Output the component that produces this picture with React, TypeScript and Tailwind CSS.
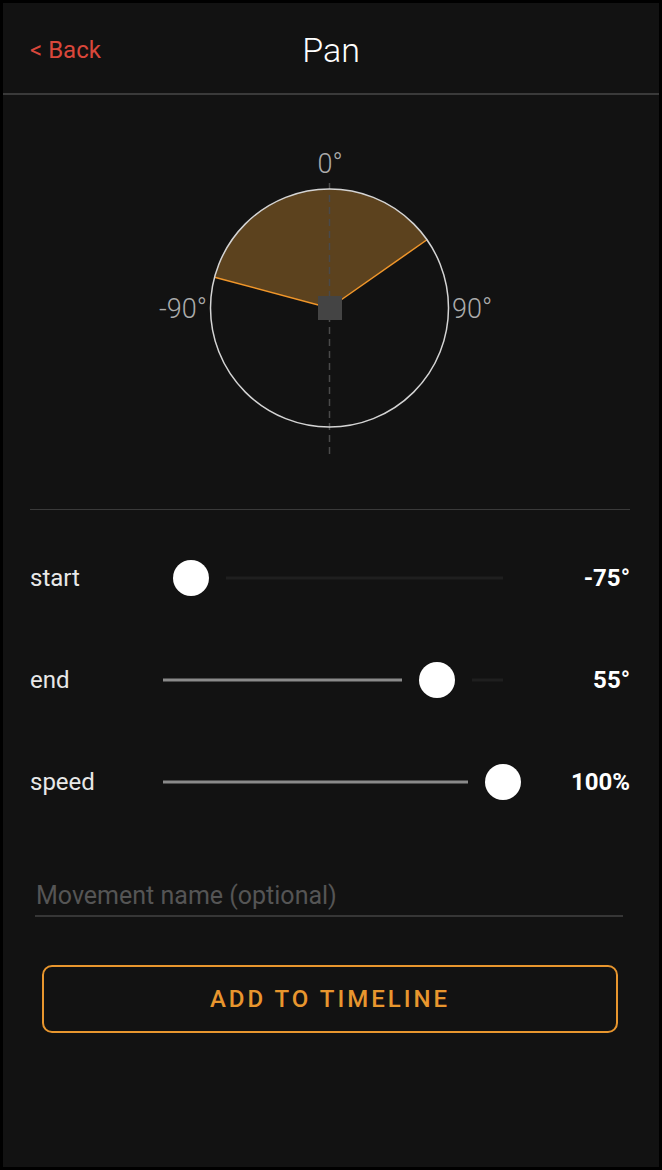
import React from "react";

function Slider({ f }: { f: number }) {
  const W = 340;
  const c = f * W;
  const activeEnd = c - 35;
  const inactiveStart = c + 35;
  return (
    <div className="relative w-[340px] h-9">
      {activeEnd > 0 && (
        <div
          className="absolute top-1/2 -translate-y-1/2 left-0 h-[3px] bg-[#8a8a8a]"
          style={{ width: activeEnd }}
        />
      )}
      {inactiveStart < W && (
        <div
          className="absolute top-1/2 -translate-y-1/2 h-[3px] bg-[#1f1f1f]"
          style={{ left: inactiveStart, width: W - inactiveStart }}
        />
      )}
      <div
        className="absolute top-0 w-9 h-9 rounded-full bg-white"
        style={{ left: c - 18 }}
      />
    </div>
  );
}

function Row({ label, f, value }: { label: string; f: number; value: string }) {
  return (
    <div className="h-[102px] flex items-center pl-[27px] pr-[29px]">
      <div className="w-[133px] text-[24px] text-[#e8e8e8] font-normal">{label}</div>
      <Slider f={f} />
      <div className="flex-1 text-right text-[24px] font-bold text-white">{value}</div>
    </div>
  );
}

export default function App() {
  const cx = 326.5;
  const cy = 213;
  const r = 119;
  const p1x = cx - r * Math.sin((75 * Math.PI) / 180);
  const p1y = cy - r * Math.cos((75 * Math.PI) / 180);
  const p2x = cx + r * Math.sin((55 * Math.PI) / 180);
  const p2y = cy - r * Math.cos((55 * Math.PI) / 180);
  return (
    <div
      className="w-[662px] h-[1170px] bg-[#121212] border-[3px] border-black flex flex-col"
      style={{ fontFamily: "Roboto, 'Liberation Sans', sans-serif" }}
    >
      <div className="h-[92px] shrink-0 grid grid-cols-[1fr_auto_1fr] items-center border-b-2 border-[#3a3a3a] pt-1">
        <div className="pl-[27px] text-[24px] text-[#d9473b]">&lt; Back</div>
        <div className="text-[34px] font-light text-white">Pan</div>
        <div />
      </div>

      <svg width="656" height="414" className="block shrink-0">
        <path
          d={`M ${cx} ${cy} L ${p1x} ${p1y} A ${r} ${r} 0 0 1 ${p2x} ${p2y} Z`}
          fill="#5c421e"
        />
        <line x1={cx} y1={88} x2={cx} y2={362} stroke="#4a4a4a" strokeWidth="1.5" strokeDasharray="7 5" />
        <line x1={cx} y1={cy} x2={p1x} y2={p1y} stroke="#f0962a" strokeWidth="1.5" />
        <line x1={cx} y1={cy} x2={p2x} y2={p2y} stroke="#f0962a" strokeWidth="1.5" />
        <circle cx={cx} cy={cy} r={r} fill="none" stroke="#d4d4d4" strokeWidth="1.5" />
        <rect x={315} y={201} width={24} height={24} fill="#444444" />
        <text x={327} y={78} textAnchor="middle" fontSize="27" fontWeight="300" fill="#ababab" fontFamily="Roboto, sans-serif">0°</text>
        <text x={204} y={223} textAnchor="end" fontSize="27" fontWeight="300" fill="#ababab" fontFamily="Roboto, sans-serif">-90°</text>
        <text x={449} y={223} textAnchor="start" fontSize="27" fontWeight="300" fill="#ababab" fontFamily="Roboto, sans-serif">90°</text>
      </svg>

      <div className="ml-[27px] mr-[29px] h-px bg-[#3a3a3a] shrink-0" />

      <div className="pt-[17px]">
        <Row label="start" f={15 / 180} value="-75°" />
        <Row label="end" f={145 / 180} value="55°" />
        <Row label="speed" f={1} value="100%" />
      </div>

      <div className="mt-[43px] ml-[32px] w-[588px] h-[41px] border-b-2 border-[#363636] flex items-center">
        <input
          className="w-full bg-transparent outline-none text-[25px] text-white placeholder:text-[#555555] pl-px"
          placeholder="Movement name (optional)"
        />
      </div>

      <button className="mt-[48px] ml-[39px] w-[576px] h-[68px] border-2 border-[#e8962e] rounded-[10px] text-[#e8962e] text-[24px] font-medium tracking-[3px] flex items-center justify-center">
        ADD TO TIMELINE
      </button>
    </div>
  );
}
